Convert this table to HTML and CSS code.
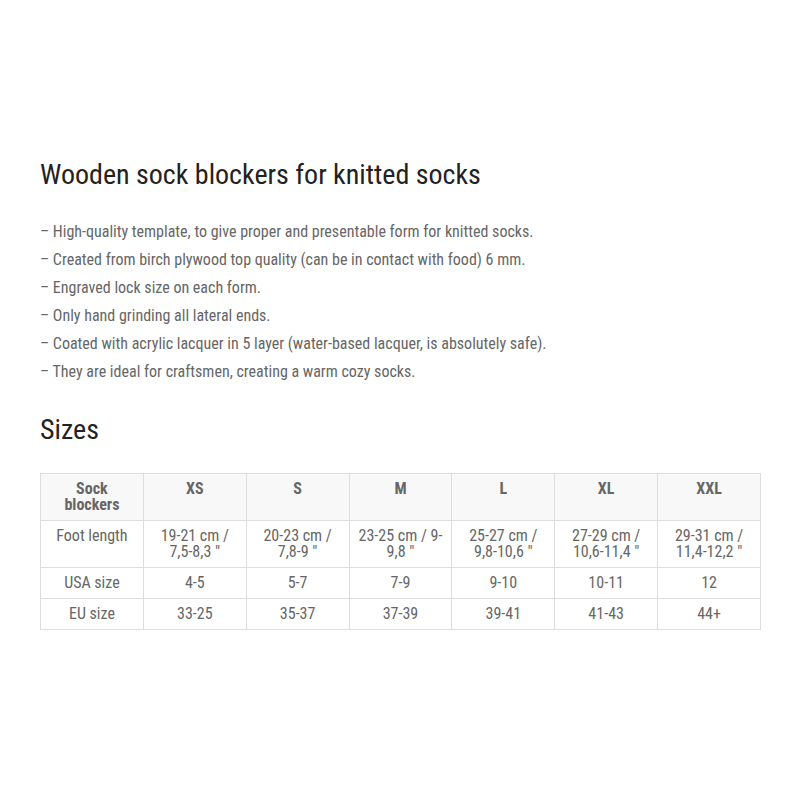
FILE: index.html
```html
<!DOCTYPE html>
<html lang="en">
<head>
    <meta charset="UTF-8">
    <meta name="viewport" content="width=device-width, initial-scale=1.0">
    <title>Wooden sock blockers</title>
    <link rel="stylesheet" href="styles.css">
</head>
<body>
    <div class="product-info">
        <h2 class="title">Wooden sock blockers for knitted socks</h2>
        <ul class="features">
            <li>– High-quality template, to give proper and presentable form for knitted socks.</li>
            <li>– Created from birch plywood top quality (can be in contact with food) 6 mm.</li>
            <li>– Engraved lock size on each form.</li>
            <li>– Only hand grinding all lateral ends.</li>
            <li>– Coated with acrylic lacquer in 5 layer (water-based lacquer, is absolutely safe).</li>
            <li>– They are ideal for craftsmen, creating a warm cozy socks.</li>
        </ul>

        <h2 class="title sizes-title">Sizes</h2>
        <table class="size-table">
            <thead>
                <tr>
                    <th>Sock blockers</th>
                    <th>XS</th>
                    <th>S</th>
                    <th>M</th>
                    <th>L</th>
                    <th>XL</th>
                    <th>XXL</th>
                </tr>
            </thead>
            <tbody>
                <tr>
                    <td>Foot length</td>
                    <td>19-21 cm / 7,5-8,3 "</td>
                    <td>20-23 cm / 7,8-9 "</td>
                    <td>23-25 cm / 9-9,8 "</td>
                    <td>25-27 cm / 9,8-10,6 "</td>
                    <td>27-29 cm / 10,6-11,4 "</td>
                    <td>29-31 cm / 11,4-12,2 "</td>
                </tr>
                <tr>
                    <td>USA size</td>
                    <td>4-5</td>
                    <td>5-7</td>
                    <td>7-9</td>
                    <td>9-10</td>
                    <td>10-11</td>
                    <td>12</td>
                </tr>
                <tr>
                    <td>EU size</td>
                    <td>33-25</td>
                    <td>35-37</td>
                    <td>37-39</td>
                    <td>39-41</td>
                    <td>41-43</td>
                    <td>44+</td>
                </tr>
            </tbody>
        </table>
    </div>
</body>
</html>
```

FILE: styles.css
```css
body {
    margin: 0;
    background: #fff;
    font-family: Roboto, "Liberation Sans", sans-serif;
    font-stretch: condensed;
}
.product-info {
    padding: 155px 39px 0 40px;
}
.title {
    margin: 0;
    font-size: 28px;
    font-weight: 400;
    line-height: 40px;
    color: #222;
}
.features {
    list-style: none;
    margin: 23px 0 0;
    padding: 0;
    font-size: 16px;
    line-height: 28px;
    color: #666;
}
.sizes-title {
    margin-top: 24px;
}
.size-table {
    width: 721px;
    margin-top: 23px;
    border-collapse: collapse;
    table-layout: fixed;
    font-size: 16px;
    color: #666;
}
.size-table th,
.size-table td {
    border: 1px solid #ddd;
    text-align: center;
    vertical-align: top;
    padding: 7px 8px;
    line-height: 16px;
}
.size-table th {
    background: #f8f8f8;
    font-weight: 700;
    color: #666;
}
```
